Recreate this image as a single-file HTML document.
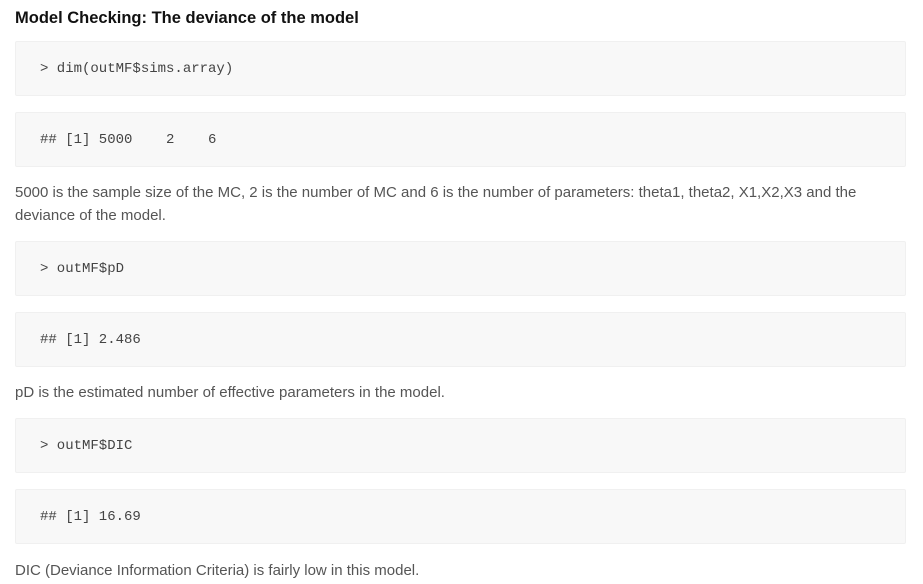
<!DOCTYPE html>
<html><head><style>
body{margin:0;background:#fff;width:923px;height:584px;overflow:hidden;font-family:"Liberation Sans",sans-serif;}
h1{position:absolute;left:15px;top:9px;margin:0;font-size:16.5px;font-weight:bold;color:#111;}
.box{position:absolute;left:15px;width:889px;height:53px;background:#f8f8f8;border:1px solid #f0f0f0;border-radius:2px;}
.box span{position:absolute;left:24px;top:19px;font-family:"Liberation Mono",monospace;font-size:14px;color:#444;white-space:pre;}
p{position:absolute;left:15px;margin:0;font-size:15px;line-height:23px;color:#555;width:900px;white-space:nowrap;}
</style></head><body>
<h1>Model Checking: The deviance of the model</h1>
<div class="box" style="top:41px"><span>&gt; dim(outMF$sims.array)</span></div>
<div class="box" style="top:112px"><span>## [1] 5000    2    6</span></div>
<p style="top:181px">5000 is the sample size of the MC, 2 is the number of MC and 6 is the number of parameters: theta1, theta2, X1,X2,X3 and the<br>deviance of the model.</p>
<div class="box" style="top:241px"><span>&gt; outMF$pD</span></div>
<div class="box" style="top:312px"><span>## [1] 2.486</span></div>
<p style="top:381px">pD is the estimated number of effective parameters in the model.</p>
<div class="box" style="top:418px"><span>&gt; outMF$DIC</span></div>
<div class="box" style="top:489px"><span>## [1] 16.69</span></div>
<p style="top:559px">DIC (Deviance Information Criteria) is fairly low in this model.</p>
</body></html>
